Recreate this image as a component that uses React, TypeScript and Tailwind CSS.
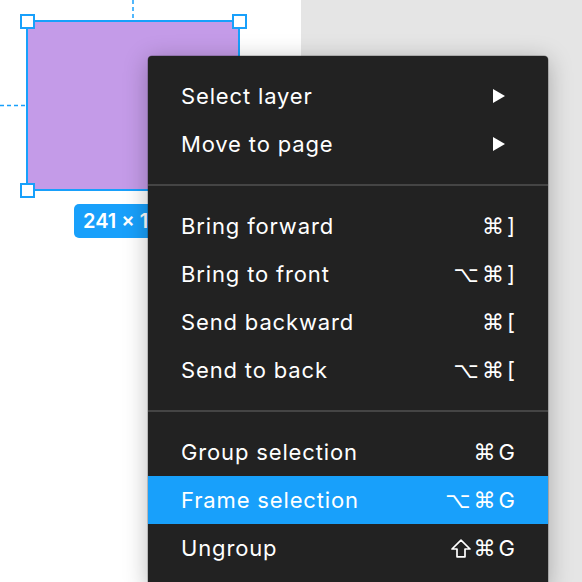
import React from 'react';

type Item = { label: string; shortcut?: string; submenu?: boolean; active?: boolean };

const groups: Item[][] = [
  [
    { label: 'Select layer', submenu: true },
    { label: 'Move to page', submenu: true },
  ],
  [
    { label: 'Bring forward', shortcut: '⌘]' },
    { label: 'Bring to front', shortcut: '⌥⌘]' },
    { label: 'Send backward', shortcut: '⌘[' },
    { label: 'Send to back', shortcut: '⌥⌘[' },
  ],
  [
    { label: 'Group selection', shortcut: '⌘G' },
    { label: 'Frame selection', shortcut: '⌥⌘G', active: true },
    { label: 'Ungroup', shortcut: '⇧⌘G' },
  ],
];

function Handle({ className }: { className: string }) {
  return <div className={`absolute w-[15px] h-[15px] bg-white border-2 border-[#18a0fb] ${className}`} />;
}

function ShiftIcon() {
  return (
    <svg width="20" height="19" viewBox="0 0 20 19" className="mt-[1px]">
      <path d="M10 1.2 L19 10 L14 10 L14 17.8 L6 17.8 L6 10 L1 10 Z" fill="none" stroke="white" strokeWidth="1.7" strokeLinejoin="round" />
    </svg>
  );
}

function Key({ c }: { c: string }) {
  if (c === '⇧') return <ShiftIcon />;
  const sym = c === '⌘' || c === '⌥';
  return <span className={sym ? "font-['DejaVu_Sans',sans-serif] text-[22px]" : ''}>{c}</span>;
}

function MenuRow({ item }: { item: Item }) {
  return (
    <div
      className={`flex items-center justify-between h-12 pl-[33px] pr-[33px] text-[22px] tracking-[0.85px] text-white ${
        item.active ? 'bg-[#18a0fb]' : ''
      }`}
    >
      <span>{item.label}</span>
      {item.submenu && (
        <svg width="14" height="16" viewBox="0 0 14 16" className="mr-[9px]">
          <path d="M1 1 L13 8 L1 15 Z" fill="white" />
        </svg>
      )}
      {item.shortcut && (
        <span className="flex items-center gap-[3px] tracking-normal">
          {item.shortcut.split('').map((c, i) => (
            <Key key={i} c={c} />
          ))}
        </span>
      )}
    </div>
  );
}

export default function App() {
  return (
    <div className="relative w-[582px] h-[582px] overflow-hidden flex font-['Inter',sans-serif]">
      <div className="w-[301px] h-full bg-white" />
      <div className="flex-1 h-full bg-[#e5e5e5]" />

      {/* canvas selection */}
      <svg className="absolute left-0 top-0" width="140" height="120">
        <line x1="133" y1="0" x2="133" y2="20" stroke="#18a0fb" strokeWidth="1.5" strokeDasharray="4 3" />
        <line x1="0" y1="105.5" x2="25" y2="105.5" stroke="#18a0fb" strokeWidth="1.5" strokeDasharray="4 3" />
      </svg>
      <div className="absolute left-[26px] top-[20px] w-[214px] h-[171px] bg-[#c49be8] border-2 border-[#18a0fb]" />
      <Handle className="left-[20px] top-[14px]" />
      <Handle className="left-[232px] top-[14px]" />
      <Handle className="left-[20px] top-[183px]" />
      <div className="absolute left-[74px] top-[204px] h-[34px] px-[9px] rounded-[5px] bg-[#18a0fb] text-white text-[20px] font-semibold flex items-center">
        241 × 170
      </div>

      {/* context menu */}
      <div className="absolute left-[148px] top-[56px] w-[400px] bg-[#222222] rounded-[4px] pt-4 pb-4 shadow-[0_4px_24px_rgba(0,0,0,0.28),0_0_0_0.5px_rgba(0,0,0,0.35)]">
        {groups.map((g, gi) => (
          <div key={gi}>
            {gi > 0 && (
              <div className="py-4">
                <div className="h-[2px] bg-[#454545]" />
              </div>
            )}
            {g.map((item) => (
              <MenuRow key={item.label} item={item} />
            ))}
          </div>
        ))}
      </div>
    </div>
  );
}
